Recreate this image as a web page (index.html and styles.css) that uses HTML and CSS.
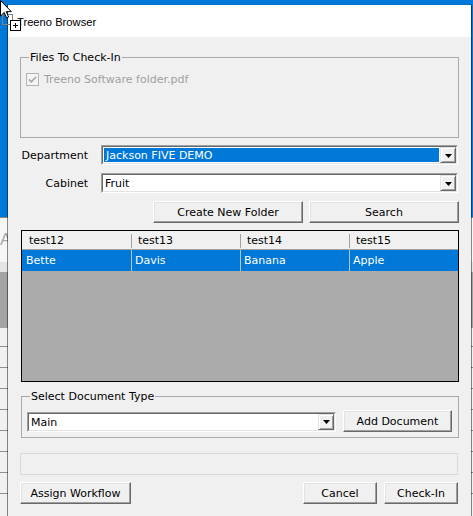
FILE: index.html
```html
<!DOCTYPE html>
<html>
<head>
<meta charset="utf-8">
<title>Treeno Browser</title>
<link rel="stylesheet" href="styles.css">
</head>
<body>
<div class="desktop">
	<div class="backapp">
		<div class="back-head"><span class="back-letter">A</span></div>
		<div class="back-strip"></div>
		<div class="back-band"></div>
		<div class="back-rows"></div>
	</div>

	<div class="window">
		<div class="titlebar">Treeno Browser</div>
		<div class="content">

			<fieldset class="group files">
				<legend>Files To Check-In</legend>
				<div class="check">
					<svg width="13" height="13" viewBox="0 0 13 13">
						<rect x="0.5" y="0.5" width="12" height="12" fill="#f4f4f4" stroke="#b4b4b4"/>
						<path d="M3 6.4 L5.3 8.8 L10 4" fill="none" stroke="#a6a6a6" stroke-width="1.7"/>
					</svg>
					<span>Treeno Software folder.pdf</span>
				</div>
			</fieldset>

			<div class="field-row">
				<span class="lbl">Department</span>
				<div class="combo">
					<div class="combo-in">
						<div class="combo-value"><span class="selected">Jackson FIVE DEMO</span></div>
						<div class="drop"><svg width="7" height="4" viewBox="0 0 7 4"><polygon points="0,0 7,0 3.5,4" fill="#000"/></svg></div>
					</div>
				</div>
			</div>

			<div class="field-row cabinet">
				<span class="lbl">Cabinet</span>
				<div class="combo">
					<div class="combo-in">
						<div class="combo-value"><span class="plain">Fruit</span></div>
						<div class="drop"><svg width="7" height="4" viewBox="0 0 7 4"><polygon points="0,0 7,0 3.5,4" fill="#000"/></svg></div>
					</div>
				</div>
			</div>

			<div class="button-row">
				<button class="btn wide" type="button">Create New Folder</button>
				<button class="btn wide" type="button">Search</button>
			</div>

			<div class="grid">
				<div class="grid-head">
					<div class="cell">test12</div>
					<div class="cell">test13</div>
					<div class="cell">test14</div>
					<div class="cell">test15</div>
				</div>
				<div class="grid-row selected-row">
					<div class="cell">Bette</div>
					<div class="cell">Davis</div>
					<div class="cell">Banana</div>
					<div class="cell">Apple</div>
				</div>
			</div>

			<fieldset class="group doctype">
				<legend>Select Document Type</legend>
				<div class="doc-row">
					<div class="combo">
						<div class="combo-in">
							<div class="combo-value"><span class="plain">Main</span></div>
							<div class="drop"><svg width="7" height="4" viewBox="0 0 7 4"><polygon points="0,0 7,0 3.5,4" fill="#000"/></svg></div>
						</div>
					</div>
					<button class="btn add" type="button">Add Document</button>
				</div>
			</fieldset>

			<div class="progress"></div>

			<div class="footer">
				<button class="btn workflow" type="button">Assign Workflow</button>
				<div class="footer-right">
					<button class="btn small" type="button">Cancel</button>
					<button class="btn small" type="button">Check-In</button>
				</div>
			</div>

		</div>
	</div>

	<svg class="cursor" width="24" height="32" viewBox="0 0 24 32">
		<rect x="2.5" y="14.5" width="10" height="10" fill="none" stroke="#fff"/>
		<rect x="2.5" y="14.5" width="10" height="10" fill="none" stroke="#000" stroke-dasharray="1 1"/>
		<path d="M0.5 0.5 V16 L4.2 12.4 L6.6 18 L8.6 17.1 L6.3 11.6 H11.3 Z" fill="#fff" stroke="#000"/>
		<rect x="10.5" y="20.5" width="10" height="10" fill="#fff" stroke="#000"/>
		<path d="M13 25.5 H18 M15.5 23 V28" stroke="#000"/>
	</svg>
</div>
</body>
</html>
```

FILE: styles.css
```css
* {
	box-sizing: border-box;
}

body {
	margin: 0;
	background: #0078d7;
	font-family: 'DejaVu Sans', sans-serif;
	font-size: 11px;
	color: #000;
	overflow: hidden;
}

.desktop {
	position: relative;
	width: 473px;
	height: 516px;
	overflow: hidden;
}

/* window behind the dialog, only its edges show */
.backapp {
	position: absolute;
	left: 0;
	top: 217px;
	width: 473px;
	height: 299px;
	background: #f0f0f0;
	border-top: 1px solid #8a8a8a;
}
.back-head {
	height: 44px;
	background: #f7f7f7;
	padding-top: 12px;
}
.back-letter {
	color: #a8a8a8;
	font-family: 'Liberation Sans', sans-serif;
	font-size: 17px;
}
.back-strip {
	height: 10px;
	background: #e4e4e4;
}
.back-band {
	height: 56px;
	background: #a3a3a3;
}
.back-rows {
	height: 188px;
	background: repeating-linear-gradient(to bottom, #f0f0f0 0, #f0f0f0 20px, #8e8e8e 20px, #8e8e8e 21px);
	background-position: 0 -2px;
}

/* dialog */
.window {
	position: absolute;
	left: 7px;
	top: 4px;
	width: 465px;
	height: 540px;
	background: #f0f0f0;
	background-clip: padding-box;
	border: 1px solid rgba(0, 0, 0, 0.45);
	border-top-color: rgba(0, 0, 0, 0.08);
}
.titlebar {
	height: 32px;
	background: #fff;
	padding: 2px 0 0 9px;
	line-height: 30px;
	font-family: 'Liberation Sans', sans-serif;
	font-size: 11.2px;
}
.content {
	padding: 13px 12px 0 12px;
}

.group {
	margin: 0;
	padding: 0 5px;
	min-width: 0;
	border: 1px solid #a9a9a9;
}
.group legend {
	margin-left: 3px;
	padding: 0 1px;
	line-height: 15px;
}
.files {
	height: 88px;
}
.check {
	display: flex;
	align-items: center;
	gap: 5px;
	height: 13px;
	margin-top: 8px;
	color: #a0a0a0;
}
.check svg {
	display: block;
}

.field-row {
	display: flex;
	align-items: center;
	height: 20px;
	margin-top: 7px;
}
.field-row.cabinet {
	margin-top: 8px;
}
.lbl {
	width: 81px;
	padding-right: 13px;
	text-align: right;
}

.combo {
	flex: 1;
	height: 20px;
	margin-right: 1px;
	border: 1px solid;
	border-color: #a0a0a0 #fff #fff #a0a0a0;
}
.combo-in {
	display: flex;
	height: 100%;
	background: #fff;
	border: 1px solid;
	border-color: #696969 #e3e3e3 #e3e3e3 #696969;
}
.combo-value {
	flex: 1;
	display: flex;
	padding: 1px;
	line-height: 16px;
}
.combo-value .selected {
	flex: 1;
	background: #0078d7;
	color: #fff;
	padding-left: 2px;
}
.combo-value .plain {
	padding-left: 1px;
}
.drop {
	width: 16px;
	display: flex;
	align-items: center;
	justify-content: center;
	background: #f0f0f0;
	border: 1px solid;
	border-color: #e3e3e3 #696969 #696969 #e3e3e3;
	box-shadow: inset 1px 1px #fff, inset -1px -1px #a0a0a0;
}
.drop svg {
	display: block;
	margin-top: 1px;
}

.btn {
	height: 22px;
	margin: 0;
	padding: 1px 0 0 0;
	font: inherit;
	color: #000;
	background: #f0f0f0;
	border: 1px solid;
	border-color: #fff #696969 #696969 #fff;
	box-shadow: inset -1px -1px #a0a0a0, inset 1px 1px #e3e3e3;
}
.button-row {
	display: flex;
	justify-content: flex-end;
	gap: 6px;
	margin-top: 8px;
}
.btn.wide {
	width: 150px;
}

.grid {
	height: 152px;
	margin: 7px 0 0 1px;
	border: 1px solid #000;
	background: #ababab;
}
.grid-head, .grid-row {
	display: grid;
	grid-template-columns: repeat(4, 1fr);
}
.grid-head {
	height: 19px;
	background: #f0f0f0;
	border-bottom: 1px solid #a0a0a0;
}
.grid-head .cell {
	padding: 2px 0 0 7px;
	line-height: 16px;
}
.grid-head .cell + .cell {
	background: linear-gradient(#a0a0a0, #a0a0a0) 0 3px / 1px 14px no-repeat;
}
.grid-row {
	height: 21px;
}
.selected-row {
	background: #0078d7;
	color: #fff;
}
.grid-row .cell {
	padding: 1px 0 0 4px;
	line-height: 20px;
}
.grid-row .cell + .cell {
	box-shadow: inset 1px 0 #b9c4cf;
}

.doctype {
	height: 49px;
	margin: 7px 0 0 1px;
	padding: 0 6px 0 5px;
}
.doc-row {
	display: flex;
	align-items: center;
	gap: 7px;
	height: 22px;
	margin-top: 6px;
}
.doc-row .combo {
	margin-right: 0;
	margin-top: 1px;
}
.btn.add {
	width: 109px;
}

.progress {
	height: 22px;
	margin: 15px 1px 0 0;
	border: 1px solid #d9d9d9;
}

.footer {
	display: flex;
	justify-content: space-between;
	margin: 7px 1px 0 0;
}
.footer-right {
	display: flex;
	gap: 7px;
}
.btn.workflow {
	width: 111px;
}
.btn.small {
	width: 74px;
}

.cursor {
	position: absolute;
	left: 0;
	top: 0;
}
```
